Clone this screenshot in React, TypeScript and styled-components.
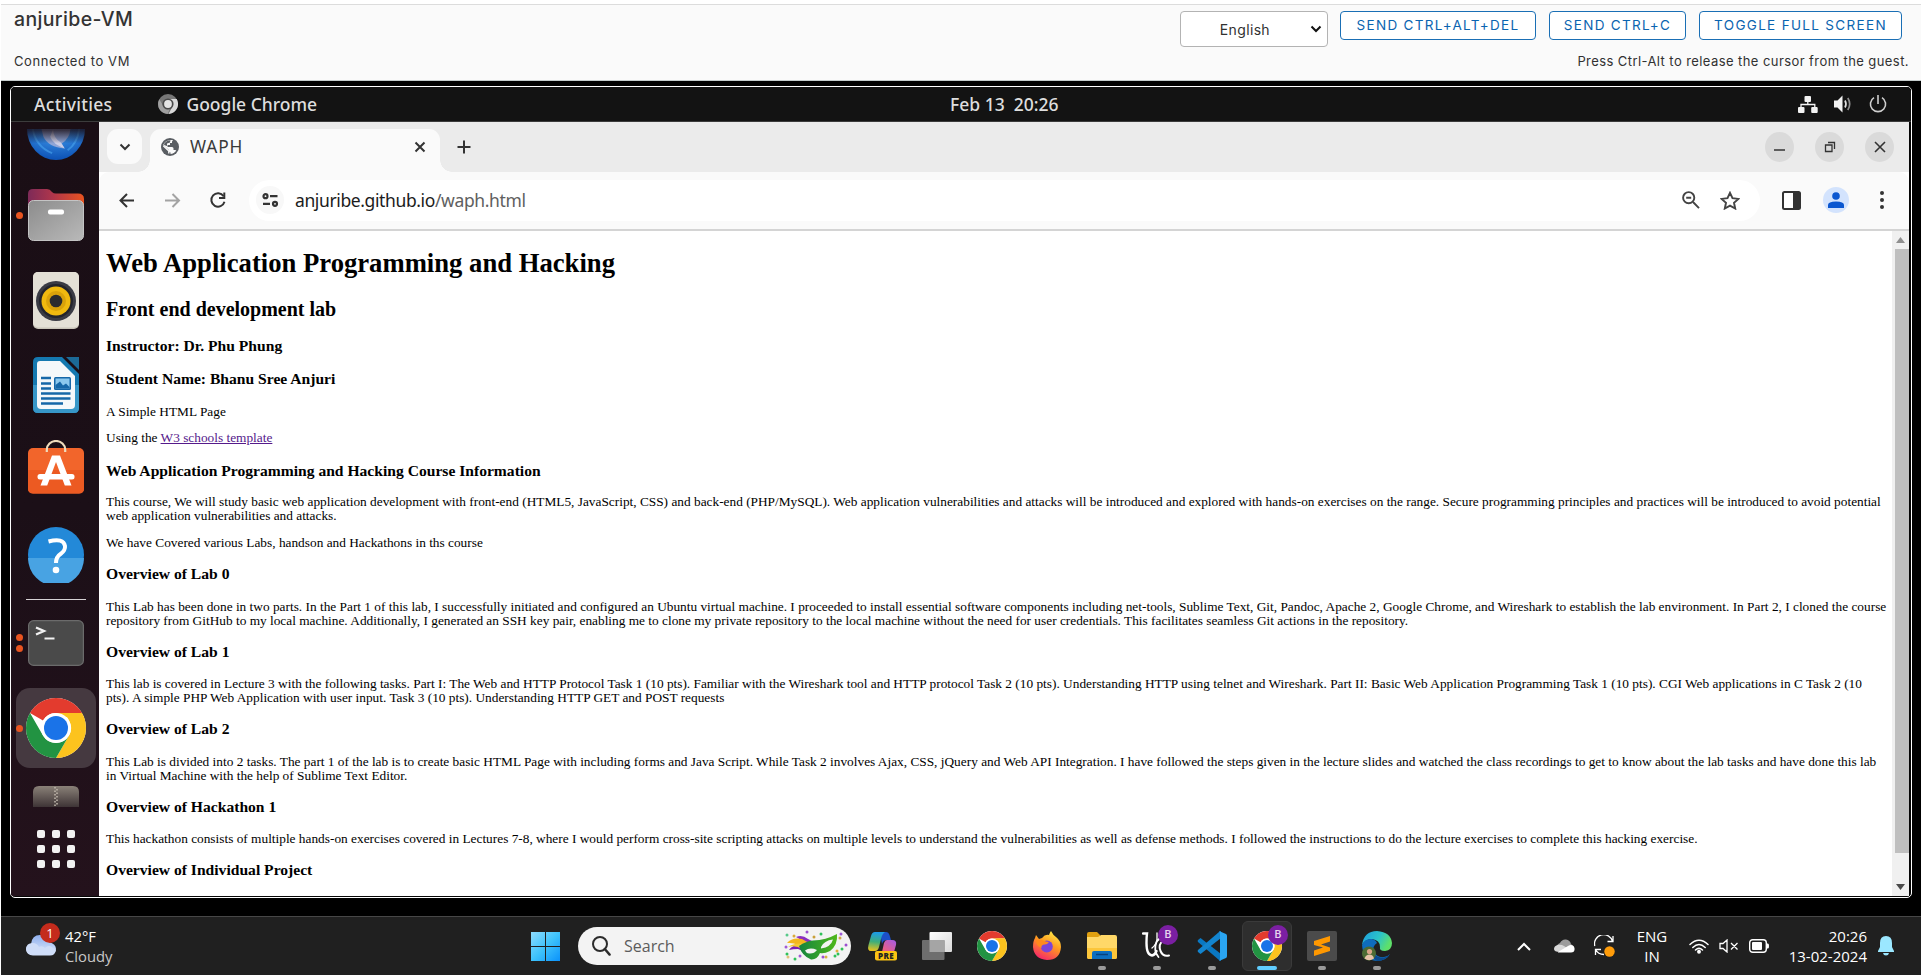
import React from "react";
import styled, { createGlobalStyle } from "styled-components";

const GlobalStyle = createGlobalStyle`
  *, *::before, *::after { box-sizing: border-box; }
  html, body { margin: 0; padding: 0; background: #fff; overflow: hidden; }
  svg { display: block; flex: none; }
`;

const ui = `"Open Sans", "Noto Sans", sans-serif`;
const gnome = `"Noto Sans", "Open Sans", sans-serif`;

/* ---------- console header ---------- */

const Screen = styled.div`
  width: 1921px;
  height: 976px;
  padding: 4px 0 1px 1px;
  display: flex;
  flex-direction: column;
  overflow: hidden;
  background: #fff;
`;

const Header = styled.header`
  height: 77px;
  flex: none;
  display: flex;
  justify-content: space-between;
  background: #fafafa;
  border-top: 1px solid #dcdcdc;
  border-bottom: 1px solid #c4cbcb;
  padding: 0 12px 0 13px;
  font-family: Inter, sans-serif;
  color: #313131;
`;

const HeaderSide = styled.div<{ $right?: boolean }>`
  display: flex;
  flex-direction: column;
  align-items: ${(p) => (p.$right ? "flex-end" : "flex-start")};
`;

const VmName = styled.h1`
  margin: 3px 0 0;
  height: 43px;
  line-height: 23px;
  font-size: 19.5px;
  font-weight: 500;
  letter-spacing: 0.35px;
  color: #333;
`;

const HeaderNote = styled.div<{ $spacing: number }>`
  line-height: 20px;
  font-size: 13px;
  letter-spacing: ${(p) => p.$spacing}px;
  white-space: nowrap;
`;

const HeaderActions = styled.div`
  display: flex;
  align-items: flex-start;
  height: 46px;
  padding: 6px 7px 0 0;
`;

const LanguageSelect = styled.div`
  width: 148px;
  height: 36px;
  margin-right: 12px;
  border: 1px solid #b3b3b3;
  border-radius: 4px;
  background: #fff;
  display: flex;
  align-items: center;
  justify-content: flex-end;
  gap: 40px;
  padding-right: 5px;
  font-size: 14px;
  letter-spacing: 0.35px;
`;

const ActionButton = styled.button<{ $width: number }>`
  width: ${(p) => p.$width}px;
  height: 29px;
  padding: 0 0 2px;
  border: 1px solid #1a6fb5;
  border-radius: 4px;
  background: #fff;
  color: #0a64b0;
  font: 400 13.5px Inter, sans-serif;
  letter-spacing: 1.32px;
  white-space: nowrap;
  & + & { margin-left: 13px; }
`;

/* ---------- virtual machine display ---------- */

const Stage = styled.main`
  height: 835px;
  flex: none;
  background: #000;
  padding: 5px 0 0 9px;
`;

const Display = styled.div`
  width: 1902px;
  height: 812px;
  border: 1px solid #fff;
  border-radius: 5px;
  background: #060606;
  overflow: hidden;
  display: flex;
  flex-direction: column;
`;

const TopBar = styled.div`
  height: 35px;
  flex: none;
  background: #131313;
  border-bottom: 1px solid #3c3c3c;
  display: grid;
  grid-template-columns: 916px auto 1fr;
  align-items: center;
  padding: 0 24px 0 23px;
  font: 500 17.5px ${gnome};
  color: #dedede;
`;

const TopBarGroup = styled.div<{ $end?: boolean; $gap: number }>`
  display: flex;
  align-items: center;
  justify-content: ${(p) => (p.$end ? "flex-end" : "flex-start")};
  gap: ${(p) => p.$gap}px;
`;

const TopBarText = styled.span<{ $spacing?: number }>`
  letter-spacing: ${(p) => p.$spacing ?? 0}px;
  white-space: pre;
`;

const Workspace = styled.div`
  height: 774px;
  display: flex;
  padding-right: 2px;
`;

const Dock = styled.nav`
  width: 88px;
  flex: none;
  background: linear-gradient(#1a0e15 0%, #1b0f17 50%, #24121c 100%);
  display: flex;
  flex-direction: column;
`;

const DockSlot = styled.div<{ $height?: number; $alignTop?: number }>`
  height: ${(p) => p.$height ?? 84.8}px;
  flex: none;
  display: flex;
  align-items: ${(p) => (p.$alignTop !== undefined ? "flex-start" : "center")};
  justify-content: center;
  padding: ${(p) => p.$alignTop ?? 0}px 0 0 1px;
  position: relative;
`;

const DockTile = styled.div<{ $active?: boolean }>`
  width: 80px;
  height: 80px;
  flex: none;
  border-radius: 14px;
  background: ${(p) => (p.$active ? "#453940" : "transparent")};
  display: flex;
  align-items: center;
  justify-content: center;
`;

const RunningDots = styled.div`
  position: absolute;
  left: 5px;
  top: 0;
  bottom: 0;
  display: flex;
  flex-direction: column;
  justify-content: center;
  gap: 4px;
`;

const RunningDot = styled.i`
  width: 7px;
  height: 7px;
  border-radius: 50%;
  background: #e95420;
`;

const DockRule = styled.hr`
  width: 60px;
  height: 1px;
  flex: none;
  margin: 2px 0 1px 15px;
  border: 0;
  background: #d6d2d4;
`;

const AppGrid = styled.div`
  display: grid;
  grid-template-columns: repeat(3, 8px);
  gap: 7px;
  i {
    height: 8px;
    border-radius: 2px;
    background: #f2f2f2;
  }
`;

/* ---------- browser ---------- */

const Browser = styled.section`
  flex: 1;
  min-width: 0;
  display: flex;
  flex-direction: column;
  background: #fff;
`;

const TabStrip = styled.div`
  height: 50px;
  flex: none;
  display: flex;
  align-items: flex-end;
  background: #ebebeb;
  padding: 0 15px 0 8px;
`;

const TabSearch = styled.button`
  width: 35px;
  height: 35px;
  margin: 0 8px 8px 0;
  padding: 0;
  border: 0;
  border-radius: 11px;
  background: #fafafa;
  display: grid;
  place-items: center;
`;

const Tab = styled.div`
  position: relative;
  width: 290px;
  height: 43px;
  border-radius: 11px 11px 0 0;
  background: #fafafa;
  display: flex;
  align-items: center;
  padding: 0 14px 8px 11px;
  font: 400 17.3px ${gnome};
  color: #3a3a3a;
  &::before, &::after {
    content: "";
    position: absolute;
    bottom: 0;
    width: 12px;
    height: 12px;
  }
  &::before {
    left: -12px;
    background: radial-gradient(circle at 0 0, transparent 11.5px, #fafafa 12px);
  }
  &::after {
    right: -12px;
    background: radial-gradient(circle at 100% 0, transparent 11.5px, #fafafa 12px);
  }
`;

const TabTitle = styled.span`
  flex: 1;
  margin-left: 11px;
  letter-spacing: 0.9px;
`;

const NewTab = styled.div`
  height: 35px;
  margin: 0 0 8px 17px;
  display: grid;
  place-items: center;
`;

const WindowButtons = styled.div`
  margin: 0 0 10px auto;
  display: flex;
  gap: 21px;
`;

const WindowButton = styled.div`
  width: 29px;
  height: 30px;
  border-radius: 50%;
  background: #dadada;
  display: grid;
  place-items: center;
`;

const Toolbar = styled.div`
  height: 59px;
  flex: none;
  display: flex;
  align-items: center;
  background: #fafafa;
  border-bottom: 2px solid #d4d4d4;
  border-radius: 10px 10px 0 0;
  padding: 0 24px 1px 18px;
`;

const NavButtons = styled.div`
  width: 132px;
  display: flex;
  gap: 26px;
`;

const AddressBar = styled.div`
  width: 1511px;
  flex: none;
  height: 41px;
  border-radius: 21px;
  background: #fff;
  display: flex;
  align-items: center;
  padding: 0 20px 0 7px;
  font: 400 17.5px ${gnome};
`;

const SiteInfo = styled.div`
  width: 28px;
  height: 28px;
  border-radius: 50%;
  background: #f8f8f8;
  display: grid;
  place-items: center;
`;

const Url = styled.span`
  flex: 1;
  margin-left: 11px;
  letter-spacing: -0.38px;
  color: #1c1c1c;
  span { color: #606060; }
`;

const AddressIcons = styled.div`
  display: flex;
  align-items: center;
  gap: 20px;
`;

const ToolbarEnd = styled.div`
  flex: 1;
  display: flex;
  align-items: center;
  justify-content: flex-end;
  gap: 22px;
`;

const Avatar = styled.div`
  width: 26px;
  height: 26px;
  margin-right: 8px;
  border-radius: 50%;
  background: #d3e3fd;
  display: grid;
  place-items: center;
`;

const Viewport = styled.div`
  flex: 1;
  min-height: 0;
  display: flex;
`;

const Article = styled.article`
  flex: 1;
  min-width: 0;
  overflow: hidden;
  padding: 17px 0 0 7px;
  font-family: "Liberation Serif", serif;
  color: #000;
  white-space: nowrap;
`;

const PageTitle = styled.h1`
  margin: 0;
  font-size: 26.67px;
  line-height: 30px;
`;

const PageSubtitle = styled.h2`
  margin: 19.5px 0 0;
  font-size: 20px;
  line-height: 22px;
`;

const Heading = styled.h3<{ $top?: number }>`
  margin: ${(p) => p.$top ?? 15}px 0 0;
  font-size: 15.6px;
  line-height: 17px;
`;

const Text = styled.p<{ $top?: number }>`
  margin: ${(p) => p.$top ?? 17.5}px 0 0;
  font-size: 13.33px;
  line-height: 14px;
`;

const Visited = styled.a`
  color: #551a8b;
  text-decoration: underline;
`;

const Scrollbar = styled.div`
  width: 17px;
  flex: none;
  background: #f0f0f0;
  display: flex;
  flex-direction: column;
  align-items: center;
  justify-content: space-between;
  padding: 6px 0 6px;
`;

const ScrollThumb = styled.div`
  align-self: flex-end;
  width: 14px;
  height: 604px;
  margin: 6px 0 auto;
  background: #bfbfbf;
`;

/* ---------- host taskbar ---------- */

const Taskbar = styled.footer`
  flex: 1;
  display: grid;
  grid-template-columns: 530px 1fr auto;
  align-items: center;
  background: #202020;
  border-top: 1px solid #474747;
  font-family: ${ui};
  color: #fff;
`;

const Weather = styled.div`
  display: flex;
  align-items: center;
  padding-left: 24px;
  font-size: 14.8px;
  line-height: 20px;
`;

const WeatherIcon = styled.div`
  position: relative;
  width: 40px;
  height: 40px;
  padding-top: 8px;
`;

const AlertBadge = styled.span`
  position: absolute;
  left: 15px;
  top: -3px;
  width: 20px;
  height: 20px;
  border-radius: 50%;
  background: #c42b1c;
  font-size: 13px;
  line-height: 20px;
  text-align: center;
`;

const WeatherText = styled.div`
  span { display: block; }
  span + span { color: #c8c8c8; }
`;

const Launcher = styled.div`
  display: flex;
  align-items: center;
`;

const SearchBox = styled.div`
  width: 273px;
  height: 38px;
  margin: 0 6px 0 18px;
  border-radius: 19px;
  background: #f3f3f3;
  display: flex;
  align-items: center;
  padding: 0 3px 0 14px;
  font-size: 16px;
  color: #5c5c5c;
  span { flex: 1; margin-left: 13px; letter-spacing: 0; }
`;

const TaskSlot = styled.div<{ $active?: boolean }>`
  position: relative;
  width: 50px;
  height: 50px;
  margin-right: 5px;
  border-radius: 6px;
  border: 1px solid ${(p) => (p.$active ? "#3a3a3a" : "transparent")};
  background: ${(p) => (p.$active ? "#2e2e2e" : "transparent")};
  display: grid;
  place-items: center;
`;

const TaskIndicator = styled.i<{ $active?: boolean }>`
  position: absolute;
  bottom: 0;
  left: 50%;
  width: ${(p) => (p.$active ? 20 : 8)}px;
  height: 4px;
  margin-left: ${(p) => (p.$active ? -10 : -4)}px;
  border-radius: 2px;
  background: ${(p) => (p.$active ? "#60cdff" : "#9a9a9a")};
`;

const ProfileBadge = styled.span`
  position: absolute;
  right: 3px;
  top: 3px;
  width: 20px;
  height: 20px;
  border-radius: 50%;
  background: #7b1fa2;
  color: #e6d4ee;
  font: 500 11px/20px Roboto, sans-serif;
  text-align: center;
`;

const Tray = styled.div`
  display: flex;
  align-items: center;
  padding-right: 27px;
  font-size: 15px;
  line-height: 20px;
`;

const TrayText = styled.div<{ $width: number; $end?: boolean }>`
  width: ${(p) => p.$width}px;
  text-align: ${(p) => (p.$end ? "right" : "center")};
  white-space: nowrap;
  span { display: block; }
`;

const Spacer = styled.div<{ $width: number }>`
  width: ${(p) => p.$width}px;
`;

/* ---------- drawings ---------- */

const ChromeLogo = ({ size }: { size: number }) => (
  <svg width={size} height={size} viewBox="0 0 60 60">
    <circle cx="30" cy="30" r="30" fill="#fff" />
    <path d="M4.02 15A30 30 0 0 1 55.98 15L30 15A15 15 0 0 0 17 22.5Z" fill="#e33b2e" />
    <path d="M55.98 15A30 30 0 0 1 30 60L43 37.5A15 15 0 0 0 43 22.5L39 15Z" fill="#fcc31e" />
    <path d="M4.02 15A30 30 0 0 0 30 60L43 37.5A15 15 0 0 1 17 37.5Z" fill="#229342" />
    <path d="M30 15H56V20H43Z" fill="#fcc31e" />
    <circle cx="30" cy="30" r="15" fill="#fff" />
    <circle cx="30" cy="30" r="12" fill="#1a73e8" />
  </svg>
);

const ChromeSymbolic = () => (
  <svg width="20" height="20" viewBox="0 0 20 20">
    <circle cx="10" cy="10" r="10" fill="#777" />
    <path d="M10 5H18.7A10 10 0 0 1 10.5 20L14.5 12.5Z" fill="#d9d9d9" />
    <path d="M1.3 5.2L5.6 12.4A5 5 0 0 0 12 14.6L9.6 20A10 10 0 0 1 1.3 5.2Z" fill="#a0a0a0" />
    <circle cx="10" cy="10" r="5.6" fill="#4a4a4a" />
    <circle cx="10" cy="10" r="3.9" fill="#e4e4e4" />
  </svg>
);

const NetworkIcon = () => (
  <svg width="20" height="17" viewBox="0 0 20 17" fill="#f2f2f2">
    <rect x="6.5" y="0" width="6.5" height="6" rx="1" />
    <rect x="0" y="11" width="6.5" height="6" rx="1" />
    <rect x="13.2" y="11" width="6.5" height="6" rx="1" />
    <path d="M3 12V8.5H16.8V12M9.8 5V9" fill="none" stroke="#f2f2f2" strokeWidth="1.3" />
  </svg>
);

const VolumeIcon = () => (
  <svg width="19" height="18" viewBox="0 0 19 18">
    <path d="M0 5.5H3.5L8.5 .5V17.5L3.5 12.5H0Z" fill="#f2f2f2" />
    <path d="M11 5.5Q13 9 11 12.5" fill="none" stroke="#e0e0e0" strokeWidth="1.7" />
    <path d="M13.8 3Q17.6 9 13.8 15" fill="none" stroke="#8f8f8f" strokeWidth="1.7" />
  </svg>
);

const PowerIcon = () => (
  <svg width="18" height="18" viewBox="0 0 18 18" fill="none" stroke="#cfcfcf" strokeWidth="1.6">
    <path d="M5 2.6A7.6 7.6 0 1 0 13 2.6M9 0V9" />
  </svg>
);

const ThunderbirdIcon = () => (
  <svg width="58" height="32" viewBox="0 0 60 33">
    <defs>
      <linearGradient id="tbFade" x1="0" y1="0" x2="0" y2="1">
        <stop offset="0" stopColor="#1a0e15" stopOpacity=".85" />
        <stop offset=".45" stopColor="#1a0e15" stopOpacity="0" />
      </linearGradient>
      <radialGradient id="tbBlue" cx=".5" cy=".2" r=".75">
        <stop offset="0" stopColor="#3d95e8" />
        <stop offset="1" stopColor="#0f55b8" />
      </radialGradient>
    </defs>
    <path d="M0 0H60A30 32 0 0 1 0 0Z" fill="url(#tbBlue)" />
    <path d="M6 0Q9 18 26 25M54 0Q52 15 42 22" fill="none" stroke="#49a5ef" strokeWidth="2" opacity=".6" />
    <path d="M15 0H45Q44 10 36 15L39 20Q22 19 17 8Z" fill="#8fa5d6" />
    <path d="M27 0Q27 9 35 14L39 20Q27 16 24 8Z" fill="#c9cde6" />
    <rect width="60" height="33" fill="url(#tbFade)" />
  </svg>
);

const FilesIcon = () => (
  <svg width="56" height="52" viewBox="0 0 56 52">
    <defs>
      <linearGradient id="folderBack" x1="0" y1="0" x2="1" y2="0">
        <stop offset="0" stopColor="#7d2a58" />
        <stop offset=".45" stopColor="#b0364b" />
        <stop offset="1" stopColor="#e95420" />
      </linearGradient>
      <linearGradient id="folderFront" x1="0" y1="0" x2="1" y2="1">
        <stop offset="0" stopColor="#8c8c8c" />
        <stop offset="1" stopColor="#b9b9b9" />
      </linearGradient>
    </defs>
    <path d="M0 5Q0 0 5 0H19Q22 0 24 3Q25.500 4.500 28 4.500H50Q56 4.500 56 10V30H0Z" fill="url(#folderBack)" />
    <rect x=".5" y="11.500" width="55" height="40" rx="5" fill="url(#folderFront)" stroke="#c4c4c4" />
    <rect x="20" y="20.500" width="16" height="5" rx="2" fill="#fff" />
  </svg>
);

const SpeakerIcon = () => (
  <svg width="46" height="57" viewBox="0 0 46 57">
    <rect width="46" height="57" rx="5" fill="#c9c4b8" />
    <rect width="46" height="55.500" rx="5" fill="#e4e0d6" />
    <circle cx="23" cy="29" r="20" fill="#3a3b44" />
    <circle cx="23" cy="29" r="17" fill="#23242c" />
    <circle cx="23" cy="29" r="14.500" fill="#f0b90f" />
    <circle cx="23" cy="29" r="10" fill="#d9a20a" />
    <circle cx="23" cy="29" r="6.300" fill="#2a2b2e" />
  </svg>
);

const WriterIcon = () => (
  <svg width="46" height="56" viewBox="0 0 46 56">
    <path d="M5 0H29L46 17V51Q46 56 41 56H5Q0 56 0 51V5Q0 0 5 0Z" fill="#1579b0" />
    <path d="M0 28H46V51Q46 56 41 56H5Q0 56 0 51Z" fill="#3797c8" />
    <path d="M7 4H27L42 19V48Q42 52 38 52H8Q4 52 4 48V7Q4 4 7 4Z" fill="#f5f8fa" />
    <path d="M33 0H46V13Z" fill="#1c6a97" />
    <path d="M8 21H18M8 26.500H18M8 31.500H18M8 36.500H37.500M8 41.500H37.500M8 46.500H30" stroke="#1667a8" strokeWidth="2.400" />
    <rect x="21" y="20" width="17" height="13" rx="1.500" fill="#1667a8" />
    <rect x="22.500" y="21.500" width="14" height="10" fill="#8cc8ee" />
    <path d="M22.500 31.500V28L27 24.500L30 28.500L33 26.500L36.500 30V31.500Z" fill="#1667a8" />
  </svg>
);

const SoftwareIcon = () => (
  <svg width="56" height="60" viewBox="0 0 56 60">
    <rect y="8" width="56" height="45.500" rx="5" fill="#f2652b" />
    <path d="M0 30H56V48.500Q56 53.500 51 53.500H5Q0 53.500 0 48.500Z" fill="#ec5a22" />
    <path d="M18.800 12V9.500A9.200 8.500 0 0 1 37.200 9.500V12" fill="none" stroke="#efdcbc" strokeWidth="2.200" />
    <path d="M24 15.500H32L43.500 45.500H36.800L28 22L19.200 45.500H12.500Z" fill="#fff" />
    <rect x="9.500" y="34" width="37" height="5.600" rx="2.500" fill="#fff" />
  </svg>
);

const HelpIcon = () => (
  <svg width="56" height="56" viewBox="0 0 56 56">
    <circle cx="28" cy="28" r="28" fill="#2389d8" />
    <path d="M0 31H56A28 28 0 0 1 0 31Z" fill="#48a3e3" />
    <path d="M20.500 14.500Q35.500 10.500 37 19Q37.500 23.500 32.500 27Q28 30 28 36" fill="none" stroke="#fff" strokeWidth="4" />
    <circle cx="28" cy="43" r="3.300" fill="#fff" />
  </svg>
);

const TerminalIcon = () => (
  <svg width="56" height="46" viewBox="0 0 56 46">
    <rect x=".6" y=".6" width="54.800" height="44.800" rx="5" fill="#4a4a4a" stroke="#6b6b6b" strokeWidth="1.200" />
    <path d="M8 7.500L16 11L8 14.500" fill="none" stroke="#f2f2f2" strokeWidth="2.300" />
    <path d="M16.500 18.500H26.500" stroke="#f2f2f2" strokeWidth="2" />
  </svg>
);

const ArchiveIcon = () => (
  <svg width="46" height="21" viewBox="0 0 46 21">
    <defs>
      <linearGradient id="zipFade" x1="0" y1="0" x2="0" y2="1">
        <stop offset="0" stopColor="#8a8178" />
        <stop offset="1" stopColor="#3e3436" />
      </linearGradient>
    </defs>
    <path d="M0 21V6Q0 0 6 0H40Q46 0 46 6V21Z" fill="url(#zipFade)" />
    <path d="M22 1V20" stroke="#c2b9ae" strokeWidth="1.500" strokeDasharray="1.500 2" />
    <path d="M24 3V20" stroke="#c2b9ae" strokeWidth="1.500" strokeDasharray="1.500 2" />
  </svg>
);

const GlobeIcon = () => (
  <svg width="18" height="18" viewBox="0 0 18 18">
    <circle cx="9" cy="9" r="9" fill="#5a5e63" />
    <path d="M9.500 2H12Q10.500 3.500 11 5H9V7H6.500V9H11Q12.500 9 12.500 10.500V12H14Q15 12 15.300 12.600Q13 16 9.500 16V14.500Q7.800 14.500 7.800 12.800V12L2.200 7Q4 2.400 9.500 2Z" fill="#fafafa" />
    <path d="M3.500 5L6.500 2.700L9.500 2.200L9 4.500L6 5.500V8L3 7Z" fill="#5a5e63" />
    <path d="M2.400 7.600L7.500 12.500V15.600Q2 13.500 2.400 7.600Z" fill="#5a5e63" />
    <path d="M2.300 7.800L7.800 13V15.600" fill="none" stroke="#fafafa" strokeWidth="1.400" />
  </svg>
);

const LineIcon = ({ w, h, d, color = "#333", stroke = 2 }: { w: number; h: number; d: string; color?: string; stroke?: number }) => (
  <svg width={w} height={h} viewBox={`0 0 ${w} ${h}`} fill="none" stroke={color} strokeWidth={stroke}>
    <path d={d} />
  </svg>
);

const ReloadIcon = () => (
  <svg width="18" height="17" viewBox="0 0 18 17">
    <path d="M14.600 4.200A6.700 6.700 0 1 0 15.500 9.800" fill="none" stroke="#333" strokeWidth="2" />
    <path d="M16.300 .6V7H10V5H14.300V.6Z" fill="#333" />
  </svg>
);

const TuneIcon = () => (
  <svg width="17" height="14" viewBox="0 0 17 14" fill="none" stroke="#333" strokeWidth="2.200">
    <circle cx="3.500" cy="3.200" r="2" />
    <path d="M8 3.200H15.500M1 10.800H8" />
    <circle cx="13" cy="10.800" r="2" />
  </svg>
);

const ZoomOutIcon = () => (
  <svg width="18" height="18" viewBox="0 0 18 18" fill="none" stroke="#444" strokeWidth="1.900">
    <circle cx="6.700" cy="6.700" r="5.600" />
    <path d="M11 11L17 17.200M4.200 6.700H9.200" />
  </svg>
);

const StarIcon = () => (
  <svg width="20" height="19" viewBox="0 0 20 19">
    <path d="M10 1.800L12.500 7.200L18.400 7.900L14 11.800L15.200 17.500L10 14.600L4.800 17.500L6 11.800L1.600 7.900L7.500 7.200Z" fill="none" stroke="#444" strokeWidth="1.900" />
  </svg>
);

const SidePanelIcon = () => (
  <svg width="19" height="19" viewBox="0 0 19 19">
    <rect x="1" y="1" width="17" height="17" rx="1.500" fill="#fff" stroke="#333" strokeWidth="2" />
    <path d="M11 1H18V18H11Z" fill="#333" />
  </svg>
);

const PersonIcon = () => (
  <svg width="16" height="16" viewBox="0 0 16 16" fill="#0b57d0">
    <circle cx="8" cy="4" r="3.800" />
    <path d="M0 16V13Q0 9.500 8 9.500Q16 9.500 16 13V16Z" />
  </svg>
);

const DotsIcon = () => (
  <svg width="6" height="18" viewBox="0 0 6 18" fill="#333">
    <circle cx="3" cy="2" r="2" />
    <circle cx="3" cy="9" r="2" />
    <circle cx="3" cy="16" r="2" />
  </svg>
);

const CloudIcon = () => (
  <svg width="31" height="22" viewBox="0 0 31 22">
    <defs>
      <linearGradient id="cloud" x1="0" y1="0" x2="0" y2="1">
        <stop offset="0" stopColor="#8fb0ee" />
        <stop offset="1" stopColor="#dfe9fb" />
      </linearGradient>
    </defs>
    <path d="M6 10Q7 1 15 1Q22 1 24 8Q31 10 31 15Q30 21 25 21H8Q1 20 1 15Q1 11 6 10Z" fill="url(#cloud)" />
    <path d="M1 15Q1.500 9 7.500 9Q12 9 14 13Q17 11 20 14Q24 10 28 14L31 16Q30 21.500 25 21.500H8Q1.500 21 1 15Z" fill="#cfddf8" />
  </svg>
);

const WindowsLogo = () => (
  <svg width="29" height="29" viewBox="0 0 29 29">
    <defs>
      <linearGradient id="win" x1="0" y1="0" x2="1" y2="1">
        <stop offset="0" stopColor="#8ddcff" />
        <stop offset=".5" stopColor="#3fc3fb" />
        <stop offset="1" stopColor="#0a92fb" />
      </linearGradient>
    </defs>
    <path d="M0 0H14V14H0ZM15 0H29V14H15ZM0 15H14V29H0ZM15 15H29V29H15Z" fill="url(#win)" />
  </svg>
);

const confetti: [number, number, string][] = [
  [2, 4, "#57c98a"], [9, 5, "#d9a93a"], [22, 1, "#9b4fd0"], [29, 6, "#c9a13a"], [36, 3, "#2fc15a"],
  [56, 3, "#a05bd6"], [55, 7, "#d0a848"], [61, 14, "#9b4fd0"], [57, 18, "#2fc15a"], [52, 20, "#e0b040"],
  [53, 23, "#2fc15a"], [50, 25, "#2fc15a"], [41, 26, "#d9b040"], [38, 26, "#9b4fd0"], [15, 25, "#a05bd6"],
  [10, 28, "#2fc15a"], [3, 26, "#e0c27a"], [2, 23, "#2fc15a"], [1, 16, "#a05bd6"],
];

const MaskIcon = () => (
  <svg width="64" height="32" viewBox="0 0 64 32">
    <defs>
      <linearGradient id="mask" x1="0" y1="0" x2="1" y2="0">
        <stop offset="0" stopColor="#14843f" />
        <stop offset="1" stopColor="#4fb81a" />
      </linearGradient>
    </defs>
    {confetti.map(([x, y, color], i) => (
      <circle key={i} cx={x + 1} cy={y + 1} r="1.500" fill={color} />
    ))}
    <path d="M12 7Q18 4 24 9L30 12L20 18Q18 9 12 7Z" fill="#8a2fc0" />
    <path d="M5 20Q8 15 16 15L19 21L14 19Q9 19 5 20Z" fill="#7b1fb5" />
    <path d="M3 13Q8 7 18 9L25 13L18 19Q14 12 3 13Z" fill="#f3b61f" />
    <path d="M4 17Q11 12 20 14L18 19Q12 15 4 17Z" fill="#f6c832" />
    <path d="M15 16Q22 11 29 10.500Q42 10 53 4Q54 15 46 21Q40 24 36 23Q33 30 27 29.500Q18 26 15 16Z" fill="url(#mask)" />
    <path d="M21 20.500Q26 17 33 20Q30 24 25 23.500Q22 23 21 20.500Z" fill="#f3f3f3" />
    <path d="M37 17Q40 10.500 49 9.500Q47 17 37 18.500Z" fill="#f3f3f3" />
  </svg>
);

const SearchGlyph = () => (
  <svg width="19" height="20" viewBox="0 0 19 20" fill="none" stroke="#2b2b2b" strokeWidth="2">
    <circle cx="8" cy="8" r="7" />
    <path d="M12.800 13L17.600 18.600" strokeLinecap="round" strokeWidth="2.400" />
  </svg>
);

const CopilotIcon = () => (
  <svg width="30" height="30" viewBox="0 0 30 30">
    <defs>
      <linearGradient id="copA" x1=".3" y1="0" x2=".2" y2="1">
        <stop offset="0" stopColor="#1c9be8" />
        <stop offset=".5" stopColor="#3fae7a" />
        <stop offset="1" stopColor="#f2c318" />
      </linearGradient>
      <linearGradient id="copB" x1="1" y1="0" x2=".2" y2="1">
        <stop offset="0" stopColor="#a35be8" />
        <stop offset="1" stopColor="#f0607a" />
      </linearGradient>
    </defs>
    <path d="M13 1H19Q21.500 1 22.500 4L24 9H20Q16 9 15 13Z" fill="#1c50c8" />
    <path d="M8 1H18Q15 3 14 8L12 16Q11 20 8 20H4Q0 20 1.500 14L4 5Q5 1 8 1Z" fill="url(#copA)" />
    <path d="M20 9H25Q30 9 29 14L27 21H15L17 12Q18 9 20 9Z" fill="url(#copB)" />
    <rect x="8" y="20" width="22" height="9.500" rx="2" fill="#fcc313" />
    <text x="19" y="27.800" textAnchor="middle" fontFamily="Open Sans, sans-serif" fontSize="8" fontWeight="800" fill="#222" letterSpacing=".4">PRE</text>
  </svg>
);

const TaskViewIcon = () => (
  <svg width="30" height="28" viewBox="0 0 30 28">
    <defs>
      <linearGradient id="tv" x1="0" y1="0" x2="1" y2="1">
        <stop offset="0" stopColor="#fff" />
        <stop offset="1" stopColor="#d9d9d9" />
      </linearGradient>
    </defs>
    <rect x="7.500" width="22.500" height="20" rx="1" fill="url(#tv)" />
    <rect y="8" width="22.500" height="20" rx="1" fill="#6e6e6e" />
    <path d="M7.500 8H22.500V20H7.500Z" fill="#a5a5a5" />
  </svg>
);

const FirefoxIcon = () => (
  <svg width="30" height="30" viewBox="0 0 30 30">
    <defs>
      <linearGradient id="ff" x1=".8" y1="0" x2=".3" y2="1">
        <stop offset="0" stopColor="#fff04a" />
        <stop offset=".45" stopColor="#ff9a1f" />
        <stop offset="1" stopColor="#f5246b" />
      </linearGradient>
    </defs>
    <path d="M17 4Q18 1 19 0Q21 4 24 6Q29 10 29 16Q28 29 15 29Q2 28 1 16Q1 10 3 7L4 4L7 8L10 7Q13 3 17 4Z" fill="url(#ff)" />
    <circle cx="14.800" cy="15.500" r="6" fill="#7a44d8" />
    <path d="M4 9Q9 8 14 10.500L17 11Q15 14 12 13.500Q9 14 9.500 17Q4 15 4 9Z" fill="#ff8a1c" />
  </svg>
);

const ExplorerIcon = () => (
  <svg width="30" height="28" viewBox="0 0 30 28">
    <path d="M0 2Q0 0 2 0H10L13 3V8H0Z" fill="#e0a010" />
    <path d="M0 5H11L14 3H28Q30 3 30 5V25Q30 27 28 27H2Q0 27 0 25Z" fill="#ffd868" />
    <path d="M0 16H30V25Q30 27 28 27H2Q0 27 0 25Z" fill="#fcc63a" />
    <path d="M5 27V21Q5 19 7 19H23Q25 19 25 21V27Z" fill="#0c6fc0" />
    <path d="M9 22.500H21" stroke="#08427c" strokeWidth="1.500" />
  </svg>
);

const UcIcon = () => (
  <svg width="30" height="30" viewBox="0 0 30 30" fill="none" stroke="#fff" strokeLinecap="round">
    <path d="M1 2.500H5Q4.500 6 4.500 12Q4.500 24 10 24.500Q13 24 14.500 20" strokeWidth="2.400" />
    <path d="M15 2V8Q15 13 10 17" strokeWidth="1.300" />
    <path d="M24 8Q18 5 14.500 11Q11 20 16.500 26" strokeWidth="1.800" />
    <path d="M21 10Q16 13 18.500 20Q21 26 27 24.500" strokeWidth="2" />
  </svg>
);

const VsCodeIcon = () => (
  <svg width="30" height="30" viewBox="0 0 30 30">
    <path d="M1 9L3.500 7L24 23V30L22 29L1 11Q.3 10 1 9Z" fill="#0a78c2" />
    <path d="M1 21L3.500 23L24 7V0L22 1L1 19Q.3 20 1 21Z" fill="#1385cf" />
    <path d="M22 0L29 3Q30 3.500 30 5V25Q30 26.500 29 27L22 30Q23 29 23 27V3Q23 1 22 0Z" fill="#2aa5f2" />
  </svg>
);

const SublimeIcon = () => (
  <svg width="30" height="30" viewBox="0 0 30 30">
    <rect width="30" height="30" rx="2" fill="#4b4b4b" />
    <path d="M7 10L23 5V10.500L14 13.500L23 16.500V20L7 25V19.500L16 16.500L7 14Z" fill="#ff9800" />
  </svg>
);

const EdgeIcon = () => (
  <svg width="30" height="30" viewBox="0 0 30 30">
    <defs>
      <linearGradient id="edgeTop" x1="0" y1="0" x2="1" y2=".4">
        <stop offset="0" stopColor="#1b9be0" />
        <stop offset=".6" stopColor="#2cc4c8" />
        <stop offset="1" stopColor="#5ee06a" />
      </linearGradient>
    </defs>
    <path d="M0 14Q2 0 15 0Q29 1 30 12Q30 19 23 20Q17 20 18 16Q18 9 10 8Q3 8 0 14Z" fill="url(#edgeTop)" />
    <path d="M0 14Q3 7 10 8Q14 9 15 12Q10 15 12 21Q15 27 22 26Q26 25.500 28 23Q24 30 15 30Q1 29 0 14Z" fill="#0e6cbd" />
    <path d="M11 14Q9 25 20 27Q25 26.500 28 23Q24 30 15 30Q8 27 11 14Z" fill="#0c4a8c" />
    <circle cx="7" cy="22.500" r="7" fill="#4c6b34" />
    <circle cx="7.500" cy="20.500" r="2.600" fill="#d8a488" />
    <path d="M2.500 27.500Q4 23.500 7.500 23.500Q11 23.500 12 27.500Q7 31 2.500 27.500Z" fill="#e6c3a8" />
  </svg>
);

const OneDriveIcon = () => (
  <svg width="21" height="14" viewBox="0 0 21 14">
    <path d="M3 8Q3 5 6 4Q8 0 12 .5Q16 1 17 5L20 8L10 11Z" fill="#9c9c9c" />
    <path d="M3.500 6Q7 5 10 7L14 9.500L6 13Q0 13 0 10Q0 7 3.500 6Z" fill="#d9d9d9" />
    <path d="M4 13L14 7Q17 5 19.500 7Q21 9 20.500 11Q20 13.500 17 13.500H4Z" fill="#fff" />
  </svg>
);

const SyncIcon = () => (
  <svg width="21" height="22" viewBox="0 0 21 22">
    <path d="M.8 11A9 9 0 0 1 18.500 6.500M19 1V6.500H13.500M1.500 20V14.500H7M1.500 14.500Q4 19.500 10 19.500" fill="none" stroke="#fff" strokeWidth="1.300" />
    <circle cx="15.500" cy="16.500" r="5.200" fill="#ff9c0a" />
  </svg>
);

const WifiIcon = () => (
  <svg width="20" height="15" viewBox="0 0 20 15" fill="none" stroke="#fff" strokeWidth="1.500" strokeLinecap="round">
    <path d="M1 5.500Q10 -3 19 5.500M3.800 8.500Q10 2.500 16.200 8.500M6.500 11Q10 7.800 13.500 11" />
    <circle cx="10" cy="12.800" r="1.200" fill="#fff" />
  </svg>
);

const MutedIcon = () => (
  <svg width="20" height="14" viewBox="0 0 20 14" fill="none" stroke="#fff" strokeWidth="1.300">
    <path d="M1 4.500H4L8 1V13L4 9.500H1ZM12 4L18.500 10.500M18.500 4L12 10.500" />
  </svg>
);

const BatteryIcon = () => (
  <svg width="20" height="14" viewBox="0 0 20 14">
    <rect x=".7" y=".7" width="16.600" height="12.600" rx="3" fill="none" stroke="#fff" strokeWidth="1.400" />
    <rect x="3" y="3" width="10" height="8" rx="1" fill="#fff" />
    <path d="M18 4.500H19Q20 4.500 20 7Q20 9.500 19 9.500H18Z" fill="#fff" />
  </svg>
);

const BellIcon = () => (
  <svg width="16" height="20" viewBox="0 0 16 20" fill="#9be7ff">
    <path d="M8 0Q14 0 14 7V11L16 15V16H0V15L2 11V7Q2 0 8 0ZM5 17H11Q10.500 19.500 8 19.500Q5.500 19.500 5 17Z" />
  </svg>
);

/* ---------- content ---------- */

type Block = { kind: "h" | "p"; lines: string[]; top?: number };

const courseBlocks: Block[] = [
  { kind: "h", top: 16.5, lines: ["Web Application Programming and Hacking Course Information"] },
  {
    kind: "p",
    top: 16.5,
    lines: [
      "This course, We will study basic web application development with front-end (HTML5, JavaScript, CSS) and back-end (PHP/MySQL). Web application vulnerabilities and attacks will be introduced and explored with hands-on exercises on the range. Secure programming principles and practices will be introduced to avoid potential",
      "web application vulnerabilities and attacks.",
    ],
  },
  { kind: "p", top: 13, lines: ["We have Covered various Labs, handson and Hackathons in ths course"] },
  { kind: "h", lines: ["Overview of Lab 0"] },
  {
    kind: "p",
    lines: [
      "This Lab has been done in two parts. In the Part 1 of this lab, I successfully initiated and configured an Ubuntu virtual machine. I proceeded to install essential software components including net-tools, Sublime Text, Git, Pandoc, Apache 2, Google Chrome, and Wireshark to establish the lab environment. In Part 2, I cloned the course",
      "repository from GitHub to my local machine. Additionally, I generated an SSH key pair, enabling me to clone my private repository to the local machine without the need for user credentials. This facilitates seamless Git actions in the repository.",
    ],
  },
  { kind: "h", lines: ["Overview of Lab 1"] },
  {
    kind: "p",
    lines: [
      "This lab is covered in Lecture 3 with the following tasks. Part I: The Web and HTTP Protocol Task 1 (10 pts). Familiar with the Wireshark tool and HTTP protocol Task 2 (10 pts). Understanding HTTP using telnet and Wireshark. Part II: Basic Web Application Programming Task 1 (10 pts). CGI Web applications in C Task 2 (10",
      "pts). A simple PHP Web Application with user input. Task 3 (10 pts). Understanding HTTP GET and POST requests",
    ],
  },
  { kind: "h", lines: ["Overview of Lab 2"] },
  {
    kind: "p",
    lines: [
      "This Lab is divided into 2 tasks. The part 1 of the lab is to create basic HTML Page with including forms and Java Script. While Task 2 involves Ajax, CSS, jQuery and Web API Integration. I have followed the steps given in the lecture slides and watched the class recordings to get to know about the lab tasks and have done this lab",
      "in Virtual Machine with the help of Sublime Text Editor.",
    ],
  },
  { kind: "h", lines: ["Overview of Hackathon 1"] },
  {
    kind: "p",
    lines: [
      "This hackathon consists of multiple hands-on exercises covered in Lectures 7-8, where I would perform cross-site scripting attacks on multiple levels to understand the vulnerabilities as well as defense methods. I followed the instructions to do the lecture exercises to complete this hacking exercise.",
    ],
  },
  { kind: "h", lines: ["Overview of Individual Project"] },
];

const withBreaks = (lines: string[]) =>
  lines.map((line, i) => (
    <React.Fragment key={i}>
      {i > 0 && <br />}
      {line}
    </React.Fragment>
  ));

type DockApp = { icon: React.ReactNode; running: number; active?: boolean };

const pinned: DockApp[] = [
  { icon: <FilesIcon />, running: 1 },
  { icon: <SpeakerIcon />, running: 0 },
  { icon: <WriterIcon />, running: 0 },
  { icon: <SoftwareIcon />, running: 0 },
  { icon: <HelpIcon />, running: 0 },
];

const opened: DockApp[] = [
  { icon: <TerminalIcon />, running: 2 },
  { icon: <ChromeLogo size={60} />, running: 1, active: true },
];

const DockItem = ({ icon, running, active }: DockApp) => (
  <DockSlot>
    <DockTile $active={active}>{icon}</DockTile>
    <RunningDots>
      {Array.from({ length: running }, (_, i) => (
        <RunningDot key={i} />
      ))}
    </RunningDots>
  </DockSlot>
);

type Task = { icon: React.ReactNode; open?: boolean; active?: boolean; badge?: boolean };

const tasks: Task[] = [
  { icon: <CopilotIcon /> },
  { icon: <TaskViewIcon /> },
  { icon: <ChromeLogo size={30} /> },
  { icon: <FirefoxIcon /> },
  { icon: <ExplorerIcon />, open: true },
  { icon: <UcIcon />, open: true, badge: true },
  { icon: <VsCodeIcon />, open: true },
  { icon: <ChromeLogo size={30} />, open: true, active: true, badge: true },
  { icon: <SublimeIcon />, open: true },
  { icon: <EdgeIcon />, open: true },
];

export default function App() {
  return (
    <Screen>
      <GlobalStyle />
      <Header>
        <HeaderSide>
          <VmName>anjuribe-VM</VmName>
          <HeaderNote $spacing={0.58}>Connected to VM</HeaderNote>
        </HeaderSide>
        <HeaderSide $right>
          <HeaderActions>
            <LanguageSelect>
              English
              <LineIcon w={12} h={8} d="M1.500 1.500L6 6L10.500 1.500" color="#111" />
            </LanguageSelect>
            <ActionButton $width={196}>SEND CTRL+ALT+DEL</ActionButton>
            <ActionButton $width={137}>SEND CTRL+C</ActionButton>
            <ActionButton $width={203}>TOGGLE FULL SCREEN</ActionButton>
          </HeaderActions>
          <HeaderNote $spacing={0.42}>Press Ctrl-Alt to release the cursor from the guest.</HeaderNote>
        </HeaderSide>
      </Header>

      <Stage>
        <Display>
          <TopBar>
            <TopBarGroup $gap={8}>
              <TopBarText $spacing={0.3}>Activities</TopBarText>
              <Spacer $width={30} />
              <ChromeSymbolic />
              <TopBarText>Google Chrome</TopBarText>
            </TopBarGroup>
            <TopBarText>Feb 13  20:26</TopBarText>
            <TopBarGroup $gap={16} $end>
              <NetworkIcon />
              <VolumeIcon />
              <PowerIcon />
            </TopBarGroup>
          </TopBar>

          <Workspace>
            <Dock>
              <DockSlot $height={51} $alignTop={7}>
                <ThunderbirdIcon />
              </DockSlot>
              {pinned.map((app, i) => (
                <DockItem key={i} {...app} />
              ))}
              <DockRule />
              {opened.map((app, i) => (
                <DockItem key={i} {...app} />
              ))}
              <DockSlot $height={59} $alignTop={15}>
                <ArchiveIcon />
              </DockSlot>
              <DockSlot $height={38}>
                <AppGrid>
                  {Array.from({ length: 9 }, (_, i) => (
                    <i key={i} />
                  ))}
                </AppGrid>
              </DockSlot>
            </Dock>

            <Browser>
              <TabStrip>
                <TabSearch>
                  <LineIcon w={12} h={8} d="M1.500 1.500L6 6L10.500 1.500" />
                </TabSearch>
                <Tab>
                  <GlobeIcon />
                  <TabTitle>WAPH</TabTitle>
                  <LineIcon w={12} h={12} d="M1.500 1.500L10.500 10.500M10.500 1.500L1.500 10.500" />
                </Tab>
                <NewTab>
                  <LineIcon w={14} h={14} d="M7 .5V13.500M.5 7H13.500" />
                </NewTab>
                <WindowButtons>
                  <WindowButton>
                    <LineIcon w={11} h={8} d="M0 7H11" stroke={1.6} />
                  </WindowButton>
                  <WindowButton>
                    <LineIcon w={12} h={12} d="M1.500 4H8V10.500H1.500ZM4 1.500H10.500V8" stroke={1.3} />
                  </WindowButton>
                  <WindowButton>
                    <LineIcon w={12} h={12} d="M1 1L11 11M11 1L1 11" stroke={1.6} />
                  </WindowButton>
                </WindowButtons>
              </TabStrip>

              <Toolbar>
                <NavButtons>
                  <LineIcon w={20} h={17} d="M17 8.500H4M10 2L3.500 8.500L10 15" />
                  <LineIcon w={20} h={17} d="M2 8.500H15M9.500 2L16 8.500L9.500 15" color="#a3a3a3" />
                  <ReloadIcon />
                </NavButtons>
                <AddressBar>
                  <SiteInfo>
                    <TuneIcon />
                  </SiteInfo>
                  <Url>
                    anjuribe.github.io<span>/waph.html</span>
                  </Url>
                  <AddressIcons>
                    <ZoomOutIcon />
                    <StarIcon />
                  </AddressIcons>
                </AddressBar>
                <ToolbarEnd>
                  <SidePanelIcon />
                  <Avatar>
                    <PersonIcon />
                  </Avatar>
                  <DotsIcon />
                </ToolbarEnd>
              </Toolbar>

              <Viewport>
                <Article>
                  <PageTitle>Web Application Programming and Hacking</PageTitle>
                  <PageSubtitle>Front end development lab</PageSubtitle>
                  <Heading $top={17}>Instructor: Dr. Phu Phung</Heading>
                  <Heading $top={16.5}>Student Name: Bhanu Sree Anjuri</Heading>
                  <Text $top={18}>A Simple HTML Page</Text>
                  <Text $top={12}>
                    Using the <Visited>W3 schools template</Visited>
                  </Text>
                  {courseBlocks.map((block, i) =>
                    block.kind === "h" ? (
                      <Heading key={i} $top={block.top}>{withBreaks(block.lines)}</Heading>
                    ) : (
                      <Text key={i} $top={block.top}>{withBreaks(block.lines)}</Text>
                    )
                  )}
                </Article>
                <Scrollbar>
                  <svg width="9" height="6" viewBox="0 0 9 6"><path d="M4.500 0L9 6H0Z" fill="#8f8f8f" /></svg>
                  <ScrollThumb />
                  <svg width="9" height="6" viewBox="0 0 9 6"><path d="M4.500 6L9 0H0Z" fill="#4a4a4a" /></svg>
                </Scrollbar>
              </Viewport>
            </Browser>
          </Workspace>
        </Display>
      </Stage>

      <Taskbar>
        <Weather>
          <WeatherIcon>
            <CloudIcon />
            <AlertBadge>1</AlertBadge>
          </WeatherIcon>
          <WeatherText>
            <span>42°F</span>
            <span>Cloudy</span>
          </WeatherText>
        </Weather>
        <Launcher>
          <WindowsLogo />
          <SearchBox>
            <SearchGlyph />
            <span>Search</span>
            <MaskIcon />
          </SearchBox>
          {tasks.map((task, i) => (
            <TaskSlot key={i} $active={task.active}>
              {task.icon}
              {task.badge && <ProfileBadge>B</ProfileBadge>}
              {task.open && <TaskIndicator $active={task.active} />}
            </TaskSlot>
          ))}
        </Launcher>
        <Tray>
          <LineIcon w={14} h={9} d="M1 8L7 2L13 8" color="#fff" />
          <Spacer $width={23} />
          <OneDriveIcon />
          <Spacer $width={19} />
          <SyncIcon />
          <Spacer $width={18} />
          <TrayText $width={38}>
            <span>ENG</span>
            <span>IN</span>
          </TrayText>
          <Spacer $width={18} />
          <WifiIcon />
          <Spacer $width={10} />
          <MutedIcon />
          <Spacer $width={10} />
          <BatteryIcon />
          <TrayText $width={98} $end>
            <span>20:26</span>
            <span>13-02-2024</span>
          </TrayText>
          <Spacer $width={11} />
          <BellIcon />
        </Tray>
      </Taskbar>
    </Screen>
  );
}
